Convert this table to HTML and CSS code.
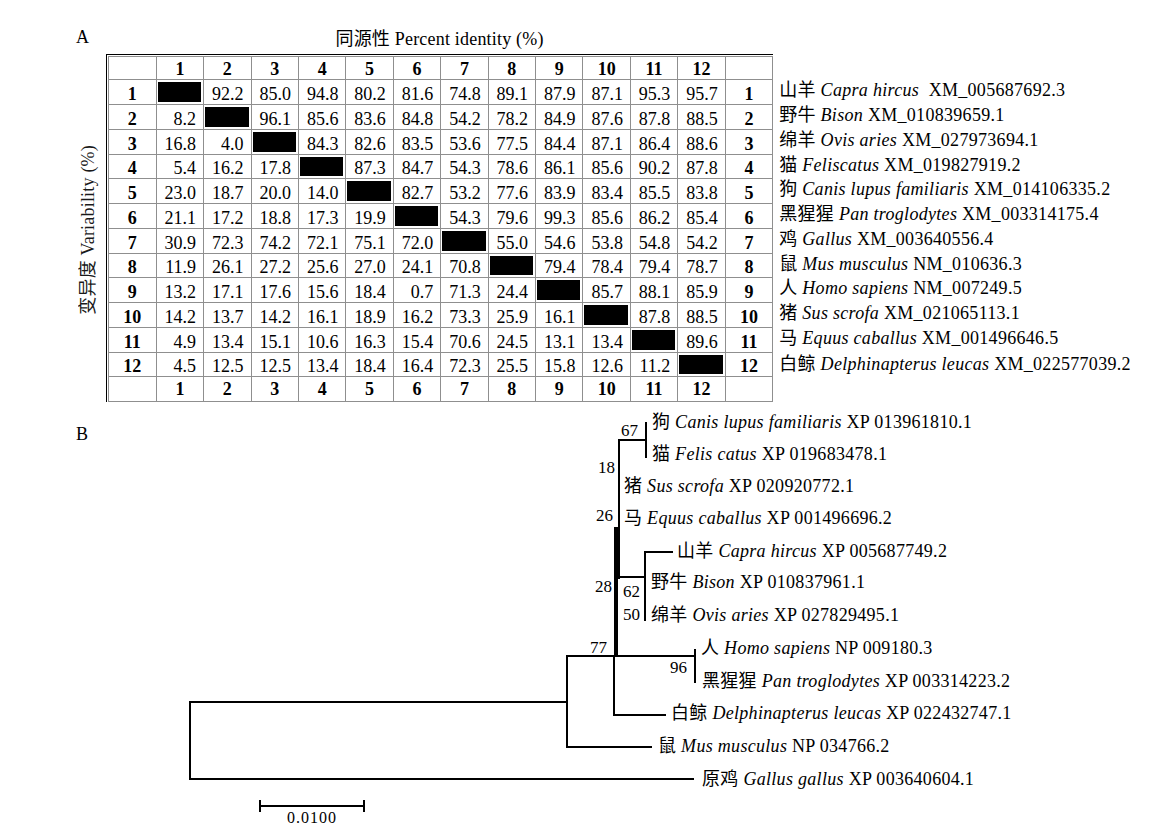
FILE: index.html
```html
<!DOCTYPE html>
<html lang="zh">
<head>
<meta charset="utf-8">
<title>Figure</title>
<link rel="stylesheet" href="styles.css">
</head>
<body>
<section class="panel-a">
  <div class="letter">A</div>
  <div class="x-title">同源性 Percent identity (%)</div>
  <div class="y-title">变异度 Variability (%)</div>
  <div class="matrix">
    <div class="c"></div><div class="c hd">1</div><div class="c hd">2</div><div class="c hd">3</div><div class="c hd">4</div><div class="c hd">5</div><div class="c hd">6</div><div class="c hd">7</div><div class="c hd">8</div><div class="c hd">9</div><div class="c hd">10</div><div class="c hd">11</div><div class="c hd">12</div><div class="c"></div>

    <div class="c hd">1</div><div class="c dg"></div><div class="c">92.2</div><div class="c">85.0</div><div class="c">94.8</div><div class="c">80.2</div><div class="c">81.6</div><div class="c">74.8</div><div class="c">89.1</div><div class="c">87.9</div><div class="c">87.1</div><div class="c">95.3</div><div class="c">95.7</div><div class="c hd">1</div>

    <div class="c hd">2</div><div class="c">8.2</div><div class="c dg"></div><div class="c">96.1</div><div class="c">85.6</div><div class="c">83.6</div><div class="c">84.8</div><div class="c">54.2</div><div class="c">78.2</div><div class="c">84.9</div><div class="c">87.6</div><div class="c">87.8</div><div class="c">88.5</div><div class="c hd">2</div>

    <div class="c hd">3</div><div class="c">16.8</div><div class="c">4.0</div><div class="c dg"></div><div class="c">84.3</div><div class="c">82.6</div><div class="c">83.5</div><div class="c">53.6</div><div class="c">77.5</div><div class="c">84.4</div><div class="c">87.1</div><div class="c">86.4</div><div class="c">88.6</div><div class="c hd">3</div>

    <div class="c hd">4</div><div class="c">5.4</div><div class="c">16.2</div><div class="c">17.8</div><div class="c dg"></div><div class="c">87.3</div><div class="c">84.7</div><div class="c">54.3</div><div class="c">78.6</div><div class="c">86.1</div><div class="c">85.6</div><div class="c">90.2</div><div class="c">87.8</div><div class="c hd">4</div>

    <div class="c hd">5</div><div class="c">23.0</div><div class="c">18.7</div><div class="c">20.0</div><div class="c">14.0</div><div class="c dg"></div><div class="c">82.7</div><div class="c">53.2</div><div class="c">77.6</div><div class="c">83.9</div><div class="c">83.4</div><div class="c">85.5</div><div class="c">83.8</div><div class="c hd">5</div>

    <div class="c hd">6</div><div class="c">21.1</div><div class="c">17.2</div><div class="c">18.8</div><div class="c">17.3</div><div class="c">19.9</div><div class="c dg"></div><div class="c">54.3</div><div class="c">79.6</div><div class="c">99.3</div><div class="c">85.6</div><div class="c">86.2</div><div class="c">85.4</div><div class="c hd">6</div>

    <div class="c hd">7</div><div class="c">30.9</div><div class="c">72.3</div><div class="c">74.2</div><div class="c">72.1</div><div class="c">75.1</div><div class="c">72.0</div><div class="c dg"></div><div class="c">55.0</div><div class="c">54.6</div><div class="c">53.8</div><div class="c">54.8</div><div class="c">54.2</div><div class="c hd">7</div>

    <div class="c hd">8</div><div class="c">11.9</div><div class="c">26.1</div><div class="c">27.2</div><div class="c">25.6</div><div class="c">27.0</div><div class="c">24.1</div><div class="c">70.8</div><div class="c dg"></div><div class="c">79.4</div><div class="c">78.4</div><div class="c">79.4</div><div class="c">78.7</div><div class="c hd">8</div>

    <div class="c hd">9</div><div class="c">13.2</div><div class="c">17.1</div><div class="c">17.6</div><div class="c">15.6</div><div class="c">18.4</div><div class="c">0.7</div><div class="c">71.3</div><div class="c">24.4</div><div class="c dg"></div><div class="c">85.7</div><div class="c">88.1</div><div class="c">85.9</div><div class="c hd">9</div>

    <div class="c hd">10</div><div class="c">14.2</div><div class="c">13.7</div><div class="c">14.2</div><div class="c">16.1</div><div class="c">18.9</div><div class="c">16.2</div><div class="c">73.3</div><div class="c">25.9</div><div class="c">16.1</div><div class="c dg"></div><div class="c">87.8</div><div class="c">88.5</div><div class="c hd">10</div>

    <div class="c hd">11</div><div class="c">4.9</div><div class="c">13.4</div><div class="c">15.1</div><div class="c">10.6</div><div class="c">16.3</div><div class="c">15.4</div><div class="c">70.6</div><div class="c">24.5</div><div class="c">13.1</div><div class="c">13.4</div><div class="c dg"></div><div class="c">89.6</div><div class="c hd">11</div>

    <div class="c hd">12</div><div class="c">4.5</div><div class="c">12.5</div><div class="c">12.5</div><div class="c">13.4</div><div class="c">18.4</div><div class="c">16.4</div><div class="c">72.3</div><div class="c">25.5</div><div class="c">15.8</div><div class="c">12.6</div><div class="c">11.2</div><div class="c dg"></div><div class="c hd">12</div>

    <div class="c"></div><div class="c hd">1</div><div class="c hd">2</div><div class="c hd">3</div><div class="c hd">4</div><div class="c hd">5</div><div class="c hd">6</div><div class="c hd">7</div><div class="c hd">8</div><div class="c hd">9</div><div class="c hd">10</div><div class="c hd">11</div><div class="c hd">12</div><div class="c"></div>
  </div>
  <ul class="species">
    <li>山羊 <i>Capra hircus</i>  XM_005687692.3</li>
    <li>野牛 <i>Bison</i> XM_010839659.1</li>
    <li>绵羊 <i>Ovis aries</i> XM_027973694.1</li>
    <li>猫 <i>Feliscatus</i> XM_019827919.2</li>
    <li>狗 <i>Canis lupus familiaris</i> XM_014106335.2</li>
    <li>黑猩猩 <i>Pan troglodytes</i> XM_003314175.4</li>
    <li>鸡 <i>Gallus</i> XM_003640556.4</li>
    <li>鼠 <i>Mus musculus</i> NM_010636.3</li>
    <li>人 <i>Homo sapiens</i> NM_007249.5</li>
    <li>猪 <i>Sus scrofa</i> XM_021065113.1</li>
    <li>马 <i>Equus caballus</i> XM_001496646.5</li>
    <li class="last">白鲸 <i>Delphinapterus leucas</i> XM_022577039.2</li>
  </ul>
</section>

<section class="panel-b">
  <div class="letter letter-b">B</div>
  <svg class="tree" width="1160" height="433" viewBox="0 405 1160 433" xmlns="http://www.w3.org/2000/svg">
    <g class="br">
      <path d="M567 702 H190 V779 H693"/>
      <path d="M695 656 H567 V747 H651"/>
      <path d="M695 650 V682"/>
      <path d="M614 656 V715 H665"/>
      <path d="M646 440 H619 V578"/>
      <path d="M618 577 H645"/>
      <path d="M646 423 V457"/>
      <path d="M672 552 H645 V620"/>
      <path d="M260 801 V811 M260 806 H364 M364 801 V811"/>
    </g>
    <path class="br-thick" d="M616 527 V657"/>

    <g class="bs">
      <text x="638" y="435.5">67</text>
      <text x="615" y="473">18</text>
      <text x="613" y="521">26</text>
      <text x="612" y="592">28</text>
      <text x="640" y="597">62</text>
      <text x="640" y="620">50</text>
      <text x="607" y="652.5">77</text>
      <text x="687" y="673">96</text>
    </g>

    <g class="lbl">
      <text x="652" y="428">狗 <tspan class="it">Canis lupus familiaris</tspan> XP 013961810.1</text>
      <text x="652" y="460">猫 <tspan class="it">Felis catus</tspan> XP 019683478.1</text>
      <text x="624" y="491.5">猪 <tspan class="it">Sus scrofa</tspan> XP 020920772.1</text>
      <text x="624" y="523.5">马 <tspan class="it">Equus caballus</tspan> XP 001496696.2</text>
      <text x="677" y="556.5">山羊 <tspan class="it">Capra hircus</tspan> XP 005687749.2</text>
      <text x="651" y="588">野牛 <tspan class="it">Bison</tspan> XP 010837961.1</text>
      <text x="651" y="620.5">绵羊 <tspan class="it">Ovis aries</tspan> XP 027829495.1</text>
      <text x="701" y="653.5">人 <tspan class="it">Homo sapiens</tspan> NP 009180.3</text>
      <text x="702" y="686.5">黑猩猩 <tspan class="it">Pan troglodytes</tspan> XP 003314223.2</text>
      <text x="671" y="718.5">白鲸 <tspan class="it">Delphinapterus leucas</tspan> XP 022432747.1</text>
      <text x="658" y="752">鼠 <tspan class="it">Mus musculus</tspan> NP 034766.2</text>
      <text x="702" y="785">原鸡 <tspan class="it">Gallus gallus</tspan> XP 003640604.1</text>
    </g>

    <text class="scale-lbl" x="312" y="823">0.0100</text>
  </svg>
</section>
</body>
</html>
```

FILE: styles.css
```css
html, body {
  margin: 0;
  padding: 0;
  background: #fff;
}

body {
  width: 1160px;
  height: 838px;
  overflow: hidden;
  font-family: "Liberation Serif", "Noto Sans CJK SC", serif;
  color: #000;
}

/* ---------- Panel A ---------- */
.panel-a {
  height: 405px;
  box-sizing: border-box;
  padding: 24px 0 0 76px;
  display: grid;
  grid-template-columns: 30px max-content max-content;
  grid-template-rows: 30px auto;
  justify-content: start;
  align-items: start;
}

.letter {
  font-size: 18px;
  line-height: 27px;
}

.x-title {
  grid-column: 2;
  grid-row: 1;
  font-size: 18px;
  line-height: 30px;
  letter-spacing: 0.2px;
  text-align: center;
}

.y-title {
  grid-column: 1;
  grid-row: 2;
  align-self: center;
  justify-self: start;
  font-size: 18px;
  line-height: 24px;
  letter-spacing: 0.2px;
  white-space: nowrap;
  writing-mode: vertical-rl;
  text-orientation: sideways;
  transform: rotate(180deg);
  color: #1a1a1a;
}

.matrix {
  grid-column: 2;
  grid-row: 2;
  display: grid;
  grid-template-columns: 48.7px repeat(13, 47.43px);
  grid-template-rows: 24.3px repeat(13, 24.75px);
  border-top: 1px solid #000;
  border-left: 1px solid #000;
  padding: 1px 0 0 1px;
}

.c {
  box-sizing: border-box;
  border-right: 1px solid #8f8f8f;
  border-bottom: 1px solid #8f8f8f;
  display: flex;
  align-items: flex-end;
  justify-content: flex-end;
  padding-right: 7px;
  font-size: 18px;
  line-height: 20px;
  white-space: nowrap;
}

.matrix > .c:nth-child(-n+14) {
  border-top: 1px solid #8f8f8f;
}

.matrix > .c:nth-child(14n+1) {
  border-left: 1px solid #8f8f8f;
}

.matrix > .c:nth-last-child(-n+14) {
  padding-bottom: 2px;
}

.c.hd {
  justify-content: center;
  padding-right: 0;
  font-weight: bold;
}

.c.dg {
  padding: 2px 2px 2px 1px;
  background: #000;
  background-clip: content-box;
}

.species {
  grid-column: 3;
  grid-row: 2;
  list-style: none;
  margin: 0 0 0 6px;
  padding: 26.3px 0 0 0;
}

.species li {
  height: 24.75px;
  font-size: 18px;
  line-height: 20px;
  letter-spacing: 0.3px;
  white-space: pre;
}

.species li.last {
  padding-top: 1px;
}

/* ---------- Panel B ---------- */
.panel-b {
  position: relative;
  height: 433px;
}

.letter-b {
  padding: 19px 0 0 76px;
  line-height: 20px;
}

.tree {
  position: absolute;
  left: 0;
  top: 0;
}

.br path {
  fill: none;
  stroke: #000;
  stroke-width: 2;
  stroke-linejoin: miter;
  stroke-linecap: square;
  shape-rendering: crispEdges;
}

.br-thick {
  fill: none;
  stroke: #000;
  stroke-width: 4;
  shape-rendering: crispEdges;
}

.bs text {
  font-family: "Liberation Serif", serif;
  font-size: 17px;
  text-anchor: end;
  fill: #000;
}

.lbl text {
  font-family: "Liberation Serif", "Noto Sans CJK SC", serif;
  font-size: 18px;
  letter-spacing: 0.3px;
  fill: #000;
}

.lbl .it {
  font-style: italic;
}

.scale-lbl {
  font-family: "Liberation Serif", serif;
  font-size: 16px;
  letter-spacing: 1px;
  text-anchor: middle;
  fill: #000;
}
```
